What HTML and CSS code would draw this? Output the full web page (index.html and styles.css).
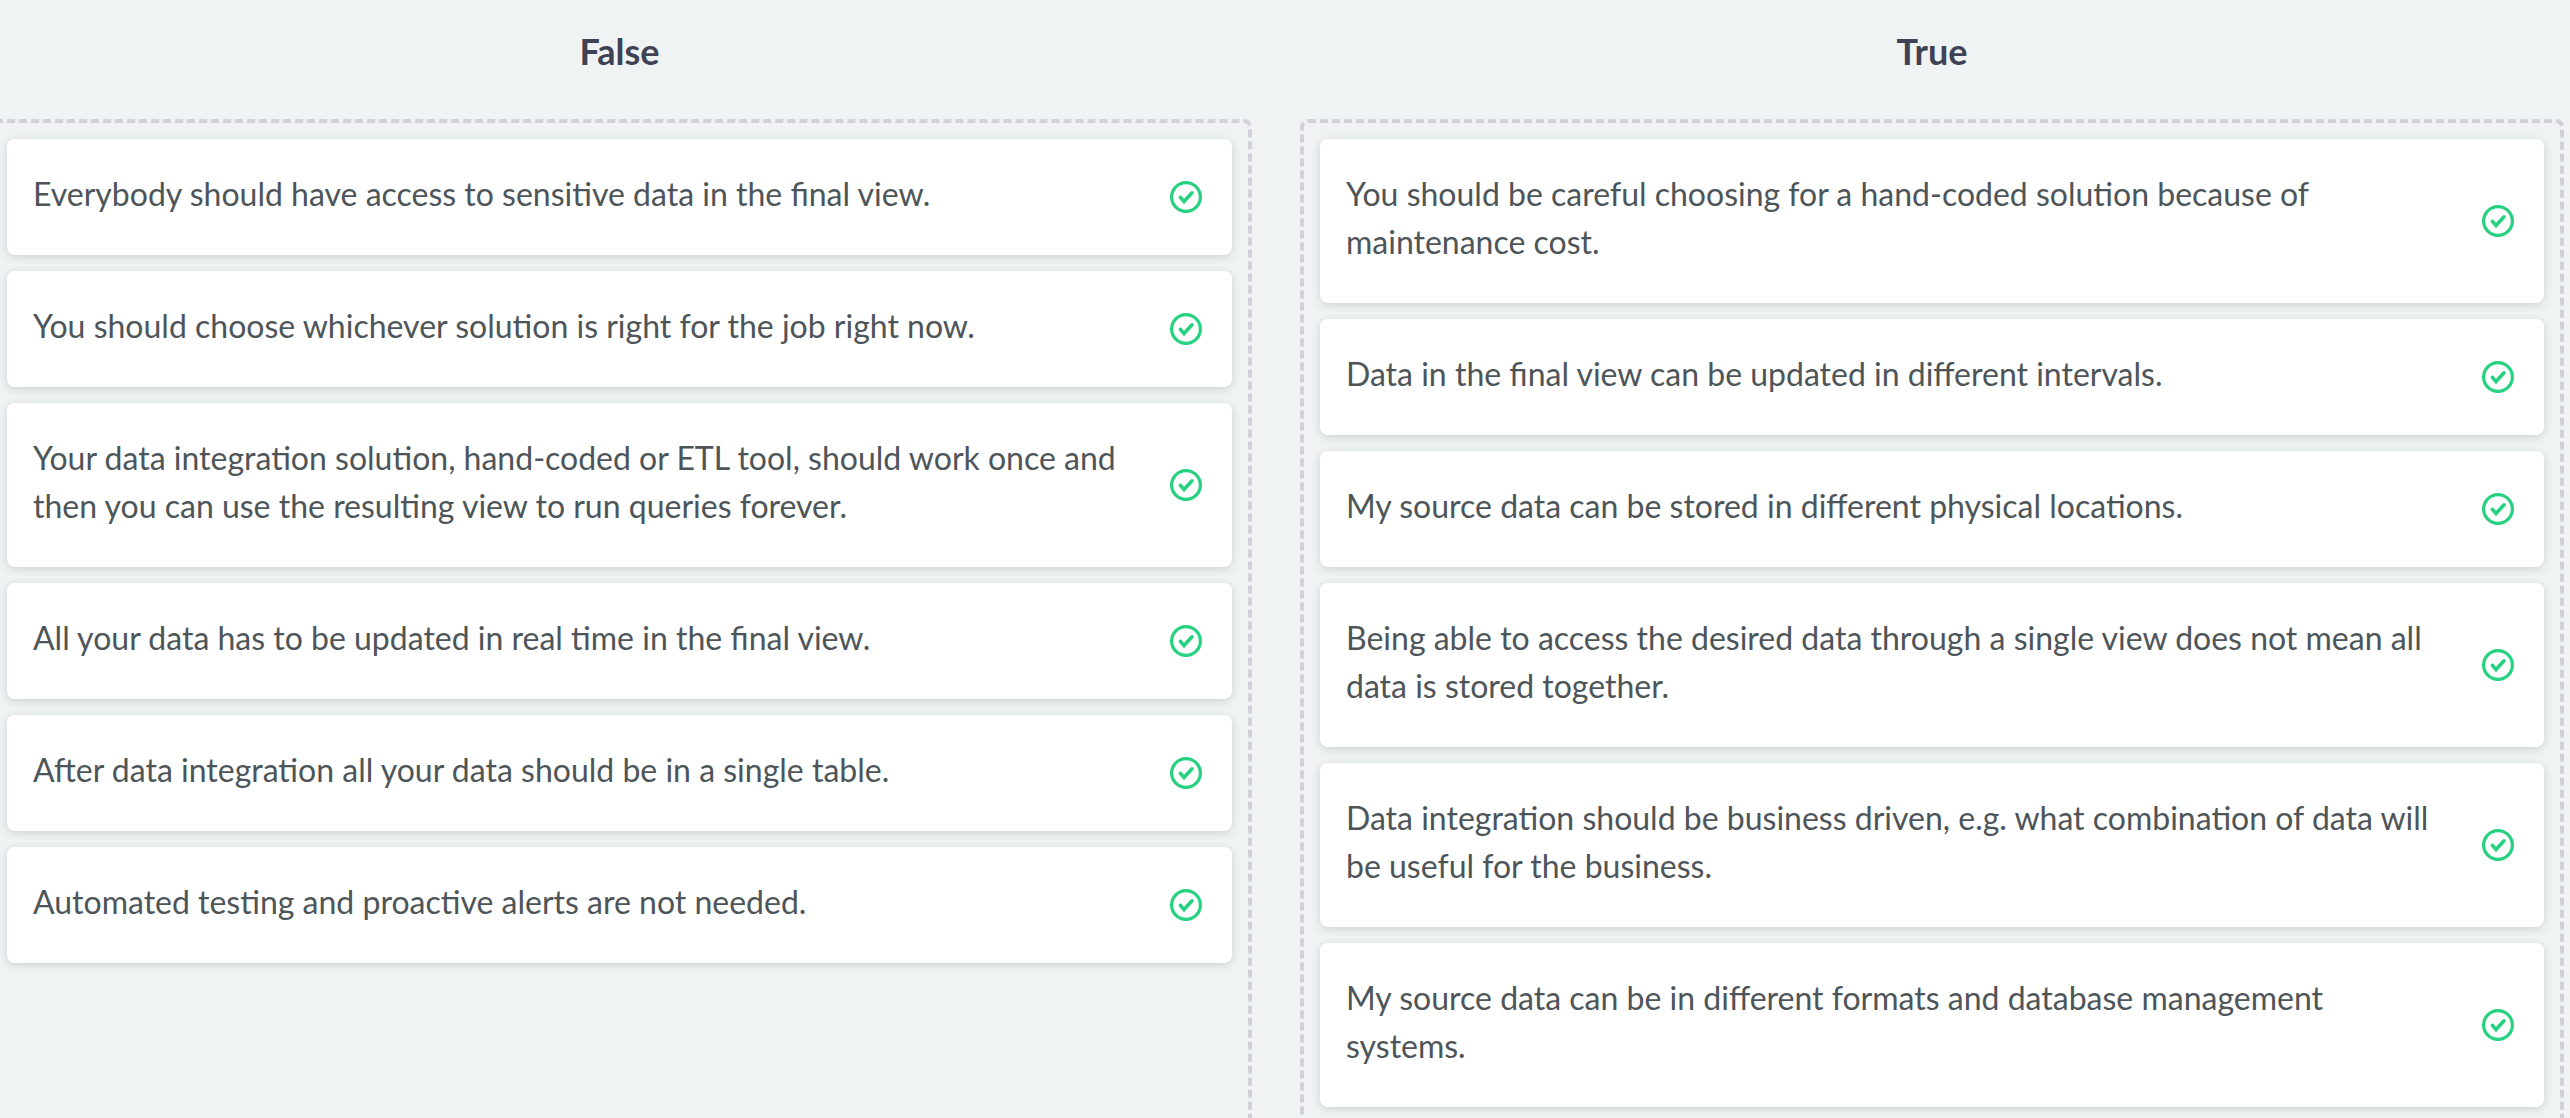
FILE: index.html
```html
<!DOCTYPE html>
<html lang="en">
<head>
<meta charset="utf-8">
<title>True or false</title>
<link rel="stylesheet" href="styles.css">
</head>
<body>
<svg width="0" height="0" class="sprite">
  <symbol id="check" viewBox="0 0 32 32">
    <circle cx="16" cy="16" r="14.4" fill="none" stroke="currentColor" stroke-width="3.2"/>
    <path d="M10.4 16.4 14 20.5 22 11.8" fill="none" stroke="currentColor" stroke-width="3.6" stroke-linecap="round"/>
  </symbol>
</svg>
<main class="board">
  <section class="group group-false">
    <h2 class="group-title">False</h2>
    <ul class="dropzone">
      <li class="card"><p>Everybody should have access to sensitive data in the final view.</p><svg class="icon"><use href="#check"/></svg></li>
      <li class="card"><p>You should choose whichever solution is right for the job right now.</p><svg class="icon"><use href="#check"/></svg></li>
      <li class="card"><p>Your data integration solution, hand-coded or ETL tool, should work once and then you can use the resulting view to run queries forever.</p><svg class="icon"><use href="#check"/></svg></li>
      <li class="card"><p>All your data has to be updated in real time in the final view.</p><svg class="icon"><use href="#check"/></svg></li>
      <li class="card"><p>After data integration all your data should be in a single table.</p><svg class="icon"><use href="#check"/></svg></li>
      <li class="card"><p>Automated testing and proactive alerts are not needed.</p><svg class="icon"><use href="#check"/></svg></li>
    </ul>
  </section>
  <section class="group group-true">
    <h2 class="group-title">True</h2>
    <ul class="dropzone">
      <li class="card"><p>You should be careful choosing for a hand-coded solution because of maintenance cost.</p><svg class="icon"><use href="#check"/></svg></li>
      <li class="card"><p>Data in the final view can be updated in different intervals.</p><svg class="icon"><use href="#check"/></svg></li>
      <li class="card"><p>My source data can be stored in different physical locations.</p><svg class="icon"><use href="#check"/></svg></li>
      <li class="card"><p>Being able to access the desired data through a single view does not mean all data is stored together.</p><svg class="icon"><use href="#check"/></svg></li>
      <li class="card"><p>Data integration should be business driven, e.g. what combination of data will be useful for the business.</p><svg class="icon"><use href="#check"/></svg></li>
      <li class="card"><p>My source data can be in different formats and database management systems.</p><svg class="icon"><use href="#check"/></svg></li>
    </ul>
  </section>
</main>
</body>
</html>
```
FILE: styles.css
```css
* { box-sizing: border-box; }

body {
  margin: 0;
  height: 1118px;
  overflow: hidden;
  background: #eff3f4;
  color: #4d5559;
  font: 32px/48px Lato, "Liberation Sans", sans-serif;
}

.sprite { display: block; }

.board {
  display: flex;
  gap: 48px;
  margin-left: -13px;
  width: 2577px;
}

.group { flex: none; width: 1264px; }
.group-false { width: 1265px; }

.group-title {
  margin: 0;
  height: 119px;
  padding-top: 24px;
  font-size: 36px;
  line-height: 54px;
  font-weight: 700;
  text-align: center;
  color: #3e4254;
}

.dropzone {
  display: flex;
  flex-direction: column;
  gap: 16px;
  margin: 0;
  padding: 16px;
  height: 1024px;
  list-style: none;
  border: 4px dashed #d1d2d9;
  border-radius: 8px;
}

.card {
  display: flex;
  align-items: center;
  justify-content: space-between;
  flex: none;
  padding: 31px 30px 37px 26px;
  background: #fff;
  border-radius: 8px;
  box-shadow: 0 2px 8px rgba(60, 75, 70, 0.2);
}

.card p { margin: 0; width: 1100px; }

.icon {
  flex: none;
  width: 32px;
  height: 32px;
  margin-top: 6px;
  color: #26d17f;
}
```
